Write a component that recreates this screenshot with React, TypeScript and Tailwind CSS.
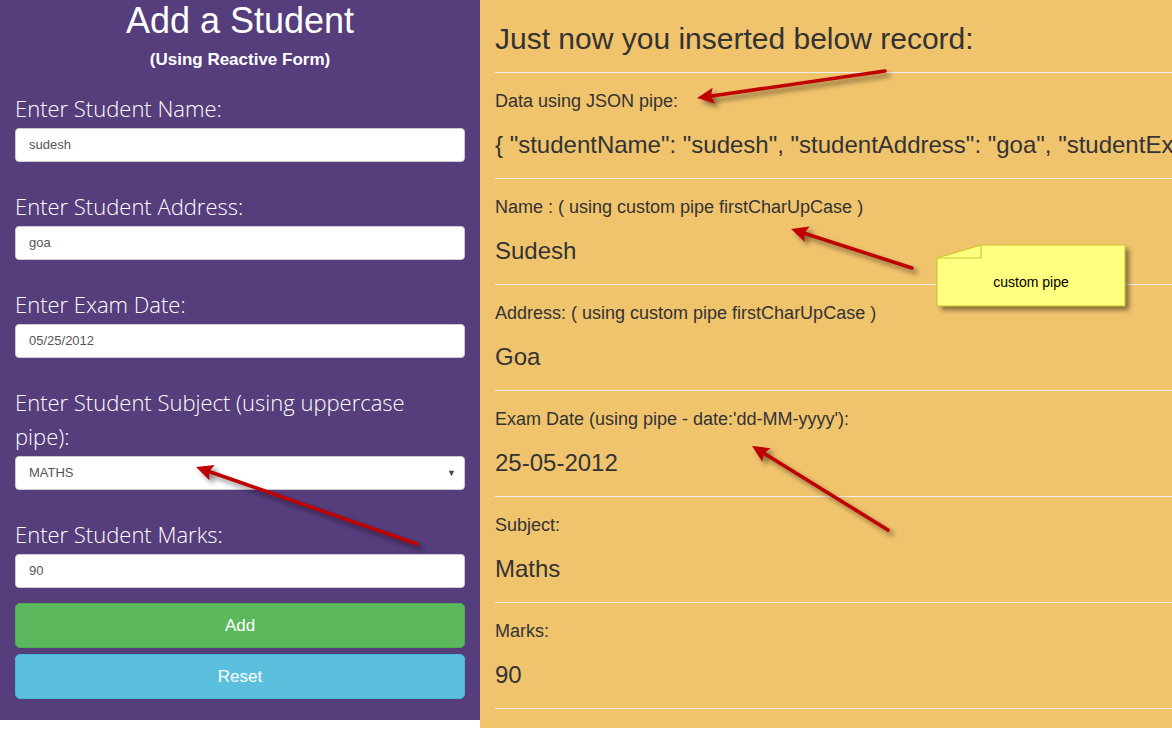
import React from "react";

const sans = { fontFamily: '"Liberation Sans", Arial, sans-serif' };

type Arrow = { x1: number; y1: number; x2: number; y2: number };

// tail (x1,y1) -> tip (x2,y2)
const arrows: Arrow[] = [
  { x1: 885, y1: 71, x2: 697, y2: 98 },
  { x1: 912, y1: 268, x2: 791, y2: 229 },
  { x1: 888, y1: 530, x2: 752, y2: 446 },
  { x1: 417, y1: 544, x2: 196, y2: 467 },
];

function ArrowShape({ a, shadow }: { a: Arrow; shadow?: boolean }) {
  const dx = a.x2 - a.x1;
  const dy = a.y2 - a.y1;
  const len = Math.hypot(dx, dy);
  const ux = dx / len;
  const uy = dy / len;
  const head = 17;
  const half = 8;
  const bx = a.x2 - ux * head;
  const by = a.y2 - uy * head;
  const pts = `${a.x2},${a.y2} ${bx - uy * half},${by + ux * half} ${bx + ux * 3},${by + uy * 3} ${bx + uy * half},${by - ux * half}`;
  const color = shadow ? "#000" : "#c00000";
  return (
    <g>
      <line x1={a.x1} y1={a.y1} x2={bx + ux * 4} y2={by + uy * 4} stroke={color} strokeWidth={3.5} strokeLinecap="round" />
      <polygon points={pts} fill={color} />
    </g>
  );
}

function Annotations() {
  return (
    <svg className="pointer-events-none absolute left-0 top-0" width={1172} height={745}>
      <defs>
        <filter id="blur" x="-20%" y="-20%" width="140%" height="140%">
          <feGaussianBlur stdDeviation="2.5" />
        </filter>
      </defs>
      <g transform="translate(4,4)" opacity={0.45} filter="url(#blur)">
        {arrows.map((a, i) => (
          <ArrowShape key={i} a={a} shadow />
        ))}
        <polygon points="937,258 981,245 1125,245 1125,306 937,306" fill="#000" />
      </g>
      {arrows.map((a, i) => (
        <ArrowShape key={i} a={a} />
      ))}
      <polygon points="937,258 981,245 1125,245 1125,306 937,306" fill="#ffff80" stroke="#c8c832" strokeWidth={1.2} />
      <polyline points="937,258 981,258 981,245" fill="none" stroke="#c8c832" strokeWidth={1.2} />
    </svg>
  );
}

function Field({ label, value, select }: { label: React.ReactNode; value: string; select?: boolean }) {
  return (
    <div>
      <label
        className="block text-[22px] leading-[34px] font-light text-white"
        style={{ fontFamily: '"Open Sans", sans-serif' }}
      >
        {label}
      </label>
      <div className="relative mt-[3px] flex h-[34px] items-center rounded-[4px] border border-[#ccc] bg-white pl-[13px] text-[13px] text-[#555]">
        {value}
        {select && <span className="absolute right-[8px] top-[10px] text-[9px] text-[#444]">▼</span>}
      </div>
    </div>
  );
}

function Section({ label, value, nowrap }: { label: string; value: string; nowrap?: boolean }) {
  return (
    <div className="border-t border-[#eee] pt-[18px] pb-[20px]">
      <div className="text-[18px] leading-[20px]">{label}</div>
      <div className={"mt-[21px] text-[24px] leading-[26px] " + (nowrap ? "whitespace-nowrap" : "")}>{value}</div>
    </div>
  );
}

export default function App() {
  return (
    <div className="relative h-[745px] w-[1172px] overflow-hidden bg-white" style={sans}>
      <div className="flex items-start">
        <div className="w-[480px] shrink-0 bg-[#563d7c] px-[15px] pb-[21px]">
          <h1 className="pt-[1px] text-center text-[36px] leading-[40px] text-white">Add a Student</h1>
          <p className="mt-[8px] text-center text-[17px] leading-[22px] font-bold text-white">(Using Reactive Form)</p>
          <div className="mt-[20px] flex flex-col gap-[27px]">
            <Field label="Enter Student Name:" value="sudesh" />
            <Field label="Enter Student Address:" value="goa" />
            <Field label="Enter Exam Date:" value="05/25/2012" />
            <Field
              label={
                <>
                  Enter Student Subject (using uppercase
                  <br />
                  pipe):
                </>
              }
              value="MATHS"
              select
            />
            <Field label="Enter Student Marks:" value="90" />
          </div>
          <button className="mt-[15px] block h-[45px] w-full rounded-[5px] border border-[#4cae4c] bg-[#5cb85c] text-[17px] text-white">
            Add
          </button>
          <button className="mt-[6px] block h-[45px] w-full rounded-[5px] border border-[#46b8da] bg-[#5bc0de] text-[17px] text-white">
            Reset
          </button>
        </div>
        <div className="min-w-0 flex-1 overflow-hidden bg-[#f0c36d] pl-[15px] text-[#333]">
          <div className="w-[900px] pb-[19px]">
            <h3 className="pt-[22px] pb-[17px] text-[30px] leading-[33px]">Just now you inserted below record:</h3>
            <Section
              label="Data using JSON pipe:"
              value={'{ "studentName": "sudesh", "studentAddress": "goa", "studentExamDate": "2012-05-25", "studentSubject": "maths" }'}
              nowrap
            />
            <Section label="Name : ( using custom pipe firstCharUpCase )" value="Sudesh" />
            <Section label="Address: ( using custom pipe firstCharUpCase )" value="Goa" />
            <Section label="Exam Date (using pipe - date:'dd-MM-yyyy'):" value="25-05-2012" />
            <Section label="Subject:" value="Maths" />
            <Section label="Marks:" value="90" />
            <div className="border-t border-[#eee]" />
          </div>
        </div>
      </div>
      <Annotations />
      <div className="absolute left-[937px] top-[258px] flex h-[48px] w-[188px] items-center justify-center text-[14px] text-black">
        custom pipe
      </div>
    </div>
  );
}
